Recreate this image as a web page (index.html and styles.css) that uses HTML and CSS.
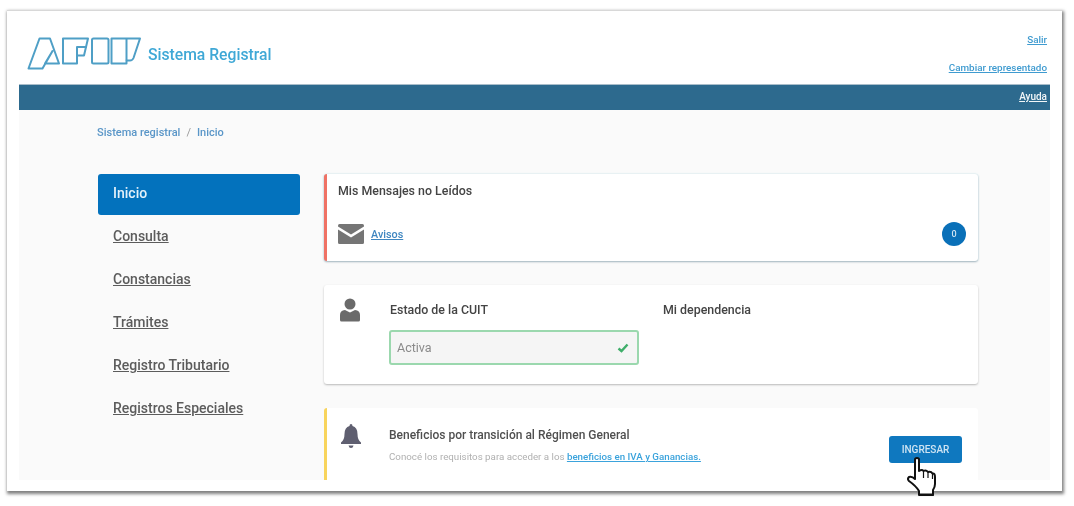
FILE: index.html
```html
<!DOCTYPE html>
<html lang="es">
<head>
<meta charset="utf-8">
<title>Sistema Registral</title>
<link rel="stylesheet" href="styles.css">
</head>
<body>
<div class="frame">
  <div class="page">
    <header class="top">
      <div class="brand">
        <svg class="logo" viewBox="0 0 115 34" width="115" height="34">
          <g fill="none" stroke="#4f9fc6" stroke-width="2" stroke-linejoin="round">
            <path d="M12.5 1.5H23L32 26.5H18L25.500 14L15.500 31.500H1.500Z"/>
            <path d="M36 1.500H61L59 10H50V26.500H36Z"/>
            <path d="M50 10H59L57 18.500H50"/>
            <rect x="65" y="1.500" width="16.500" height="25" rx="1.500"/>
            <path d="M84.500 1.500H113L106.500 21Q105.500 23.500 103 23.500H99.500V26.500H84.500Z"/>
            <path d="M99.500 1.500V23.500"/>
          </g>
        </svg>
        <span class="brand-name">Sistema Registral</span>
      </div>
      <div class="top-links">
        <a class="link-top" href="#">Salir</a>
        <a class="link-top" href="#">Cambiar representado</a>
      </div>
    </header>
    <div class="bar"><a class="help" href="#">Ayuda</a></div>
    <div class="content">
      <nav class="crumbs"><a href="#">Sistema registral</a><span class="sep">/</span><a href="#">Inicio</a></nav>
      <div class="columns">
        <ul class="menu">
          <li><a class="item active" href="#">Inicio</a></li>
          <li><a class="item" href="#">Consulta</a></li>
          <li><a class="item" href="#">Constancias</a></li>
          <li><a class="item" href="#">Trámites</a></li>
          <li><a class="item" href="#">Registro Tributario</a></li>
          <li><a class="item" href="#">Registros Especiales</a></li>
        </ul>
        <main class="cards">
          <section class="card card-msg">
            <h2 class="title">Mis Mensajes no Leídos</h2>
            <div class="msg-row">
              <svg class="env" viewBox="0 0 26 20" width="26" height="20">
                <path fill="#757575" d="M1.500 0H24.500Q26 0 26 1.500V2.500L13 10.500L0 2.500V1.500Q0 0 1.500 0Z"/>
                <path fill="#757575" d="M0 5.500L13 13.500L26 5.500V18.500Q26 20 24.500 20H1.500Q0 20 0 18.500Z"/>
              </svg>
              <a class="avisos" href="#">Avisos</a>
              <span class="badge">0</span>
            </div>
          </section>
          <section class="card card-cuit">
            <svg class="person" viewBox="0 0 20 24" width="20" height="24">
              <circle cx="10" cy="6" r="5.500" fill="#6a6a6a"/>
              <path fill="#6a6a6a" d="M0 22V17Q0 12.500 5 12L10 14.500L15 12Q20 12.500 20 17V22Q20 23.500 18.500 23.500H1.500Q0 23.500 0 22Z"/>
            </svg>
            <div class="cuit-col">
              <h2 class="title cuit-title">Estado de la CUIT</h2>
              <div class="status">
                <span>Activa</span>
                <svg viewBox="0 0 12 10" width="12" height="10"><path d="M1.500 5.500L4.500 8L10.500 1.500" fill="none" stroke="#3fae6a" stroke-width="2.400"/></svg>
              </div>
            </div>
            <h2 class="title dep">Mi dependencia</h2>
          </section>
          <section class="card card-ben">
            <svg class="bell" viewBox="0 0 20 24" width="20" height="24">
              <path fill="#5f5f70" d="M10 0Q11.500 0 11.500 2Q16.500 3.500 16.500 10Q16.500 16 20 18.500V20H0V18.500Q3.500 16 3.500 10Q3.500 3.500 8.500 2Q8.500 0 10 0Z"/>
              <path fill="#5f5f70" d="M7.500 21.500H12.500Q12 24 10 24Q8 24 7.500 21.500Z"/>
            </svg>
            <div class="ben-col">
              <h2 class="title ben-title">Beneficios por transición al Régimen General</h2>
              <p class="ben-text">Conocé los requisitos para acceder a los <a href="#">beneficios en IVA y Ganancias.</a></p>
            </div>
            <a class="btn" href="#">INGRESAR</a>
          </section>
        </main>
      </div>
    </div>
  </div>
  <svg class="hand" viewBox="0 0 32 40" width="32" height="40">
    <path fill="#fff" stroke="#111" stroke-width="2" stroke-linejoin="round" d="M8 2.500Q8 1 10 1Q12 1 12 2.500V14Q15 12 16.500 14Q19 12.500 21 15Q24 14 25.500 16.500Q28 16 28 20V27Q28 30 26 33V38H12V34Q9 29 2 24Q0 22 2 20Q5 19 8 22Z"/>
    <path fill="none" stroke="#111" stroke-width="1.200" d="M16.500 14V21M21 15V21M25.500 16.500V22"/>
    <path fill="none" stroke="#111" stroke-width="2" d="M12 37.500H27"/>
  </svg>
</div>
</body>
</html>
```
FILE: styles.css
```css
* { box-sizing: border-box; }
html, body { margin: 0; padding: 0; background: #fff; }
body { width: 1074px; height: 506px; overflow: hidden; font-family: Roboto, "Liberation Sans", sans-serif; }
a { color: inherit; }

.frame {
  position: relative;
  width: 1055px;
  height: 481px;
  margin: 10px 0 0 7px;
  padding: 0 12px 11px;
  background: #fff;
  border-top: 1px solid #d8d8d8;
  box-shadow: 1px 2px 3px 1px rgba(60,60,60,.65);
}
.page { height: 100%; display: flex; flex-direction: column; overflow: hidden; background: #fafafa; filter: blur(.7px); }

.top { height: 73px; flex: none; background: #fff; display: flex; justify-content: space-between; padding: 22px 3px 0 8px; }
.brand { display: flex; align-items: flex-start; gap: 6px; padding-top: 3px; }
.logo { flex: none; margin-top: 1px; }
.brand-name { font-size: 15.700px; font-weight: 500; color: #3fa8d6; line-height: 19px; margin-top: 9px; }
.top-links { display: flex; flex-direction: column; align-items: flex-end; gap: 15px; font-size: 9.900px; font-weight: 500; line-height: 13px; }
.link-top { color: #3f9bd0; }

.bar { height: 26px; flex: none; background: #2d6a8e; display: flex; align-items: center; justify-content: flex-end; padding: 0 3px 2px 0; border-top: 1px solid #a9bdca; }
.help { color: #f2f6f8; font-size: 10px; font-weight: 500; }

.content { flex: 1; min-height: 0; padding: 16px 72px 0 78px; }
.crumbs { font-size: 11px; line-height: 13px; color: #5a96c8; font-weight: 500; }
.crumbs a { text-decoration: none; }
.sep { color: #999; margin: 0 6px; font-weight: 400; }

.columns { display: flex; gap: 24px; margin: 35px 0 0 1px; align-items: flex-start; }
.menu { list-style: none; margin: 0; padding: 0; width: 202px; flex: none; display: flex; flex-direction: column; gap: 2px; }
.item { display: flex; align-items: center; height: 41px; padding: 0 15px 3px; font-size: 14px; font-weight: 500; color: #5c5c5c; }
.item.active { background: #0372bd; color: #e4f1fa; border-radius: 3px; text-decoration: none; }

.cards { flex: 1; display: flex; flex-direction: column; gap: 24px; min-width: 0; }
.card { background: #fff; border-radius: 3px; }
.title { margin: 0; font-size: 12.400px; line-height: 15px; font-weight: 500; color: #444; }

.card-msg { height: 87px; border-left: 3px solid #ef7265; padding: 9px 12px 0 11px; box-shadow: 0 1px 2px rgba(70,100,120,.45), 0 0 2px rgba(170,225,235,.6); }
.msg-row { display: flex; align-items: center; margin-top: 24px; }
.env { flex: none; }
.avisos { margin-left: 7px; font-size: 10.800px; font-weight: 500; color: #3f86c0; }
.badge { margin-left: auto; width: 24px; height: 24px; border-radius: 50%; background: #0a70b8; color: #cfe3f2; font-size: 9px; font-weight: 500; display: flex; align-items: center; justify-content: center; }

.card-cuit { height: 99px; display: flex; align-items: flex-start; padding: 13px 0 0 16px; box-shadow: 0 1px 2px rgba(90,90,90,.4); }
.person { flex: none; }
.cuit-col { width: 250px; margin-left: 29px; }
.cuit-title { padding-left: 1px; }
.cuit-col .title, .dep { margin-top: 4px; }
.status { height: 35px; margin-top: 13px; border: 2px solid #9bd8ae; border-radius: 3px; background: #f5f5f5; display: flex; align-items: center; justify-content: space-between; padding: 0 8px 0 6px; font-size: 12.500px; color: #8a8a8a; }
.dep { margin-left: 24px; }

.card-ben { height: 80px; border-left: 3px solid #f8d45c; display: flex; align-items: flex-start; padding: 16px 16px 0 14px; }
.bell { flex: none; }
.ben-col { margin-left: 28px; flex: 1; }
.ben-title { font-size: 12px; margin-top: 4px; color: #4f4f4f; }
.ben-text { margin: 8px 0 0; font-size: 9.750px; line-height: 12px; color: #b0b0b0; }
.ben-text a { color: #3ba3dc; font-weight: 500; }
.btn { flex: none; width: 73px; height: 27px; margin-top: 12px; border-radius: 3px; background: #0f78bf; color: #cfe4f3; font-size: 10px; font-weight: 500; display: flex; align-items: center; justify-content: center; text-decoration: none; }

.hand { position: absolute; left: 900px; top: 446px; }
```
